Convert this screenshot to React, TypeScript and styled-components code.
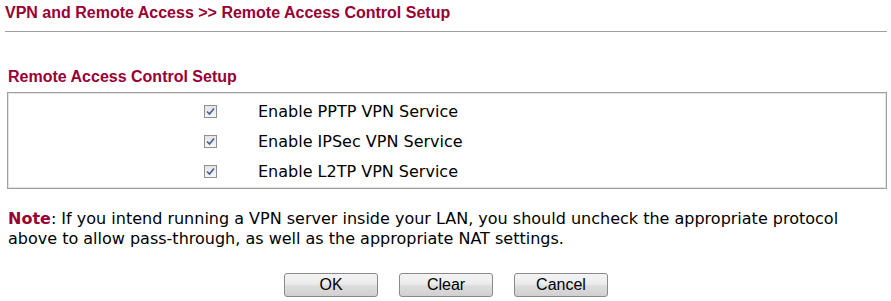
import { FC } from "react";
import styled, { createGlobalStyle } from "styled-components";

const services = ["Enable PPTP VPN Service", "Enable IPSec VPN Service", "Enable L2TP VPN Service"];
const buttons = ["OK", "Clear", "Cancel"];

const App: FC = () => {
	return (
		<>
			<GlobalStyle />
			<Page>
				<Title>VPN and Remote Access &gt;&gt; Remote Access Control Setup</Title>
				<Rule />
				<SubTitle>Remote Access Control Setup</SubTitle>
				<Box>
					{services.map((name) => (
						<Row key={name}>
							<Check>
								<svg width="9" height="9" viewBox="0 0 9 9">
									<path d="M1 4.5 L3.5 7 L8 1.5" fill="none" stroke="#4a5a9a" strokeWidth="1.6" />
								</svg>
							</Check>
							<Label>{name}</Label>
						</Row>
					))}
				</Box>
				<Note>
					<NoteTag>Note</NoteTag>: If you intend running a VPN server inside your LAN, you should uncheck the appropriate protocol
					above to allow pass-through, as well as the appropriate NAT settings.
				</Note>
				<Actions>
					{buttons.map((b) => (
						<Button key={b} type="button">
							{b}
						</Button>
					))}
				</Actions>
			</Page>
		</>
	);
};

export default App;

const GlobalStyle = createGlobalStyle`
	body {
		margin: 0;
		background: #ffffff;
		font-family: "DejaVu Sans", Verdana, sans-serif;
	}
`;

const Page = styled.div`
	width: 891px;
	height: 301px;
	overflow: hidden;
	display: flex;
	flex-direction: column;
`;

const Title = styled.h1`
	margin: 3px 0 0 5px;
	font-family: "Liberation Sans", Arial, sans-serif;
	font-size: 16px;
	font-weight: 700;
	line-height: 19px;
	color: #990033;
`;

const Rule = styled.div`
	margin: 9px 4px 0 5px;
	height: 1px;
	background: #a0a0a0;
`;

const SubTitle = styled.h2`
	margin: 35px 0 0 8px;
	font-family: "Liberation Sans", Arial, sans-serif;
	font-size: 16px;
	font-weight: 700;
	line-height: 19px;
	color: #990033;
`;

const Box = styled.div`
	margin: 6px 4px 0 7px;
	padding: 3px 0 2px;
	border: 1px solid #a0a0a0;
	box-shadow: inset 1px 1px 0 #e3e3e3, inset -1px -1px 0 #e3e3e3;
	display: flex;
	flex-direction: column;
`;

const Row = styled.div`
	display: flex;
	align-items: center;
	height: 30px;
	padding-left: 196px;
`;

const Check = styled.span`
	width: 11px;
	height: 11px;
	border: 1px solid #8f8f8f;
	background: linear-gradient(#e4e4e4, #f6f6f6);
	display: flex;
	align-items: center;
	justify-content: center;
`;

const Label = styled.span`
	margin-left: 41px;
	font-size: 16px;
	color: #000000;
`;

const Note = styled.p`
	margin: 20px 0 0 8px;
	width: 850px;
	font-size: 16px;
	line-height: 20px;
	color: #000000;
`;

const NoteTag = styled.span`
	font-weight: 700;
	color: #990033;
`;

const Actions = styled.div`
	margin-top: 24px;
	display: flex;
	justify-content: center;
	gap: 21px;
	padding-left: 1px;
`;

const Button = styled.button`
	width: 94px;
	height: 24px;
	padding: 0;
	border: 1px solid #8a8a8a;
	border-radius: 3px;
	background: linear-gradient(#f4f4f4 0%, #ececec 45%, #dcdcdc 55%, #d0d0d0 100%);
	font-family: "Liberation Sans", Arial, sans-serif;
	font-size: 16px;
	color: #000000;
`;
